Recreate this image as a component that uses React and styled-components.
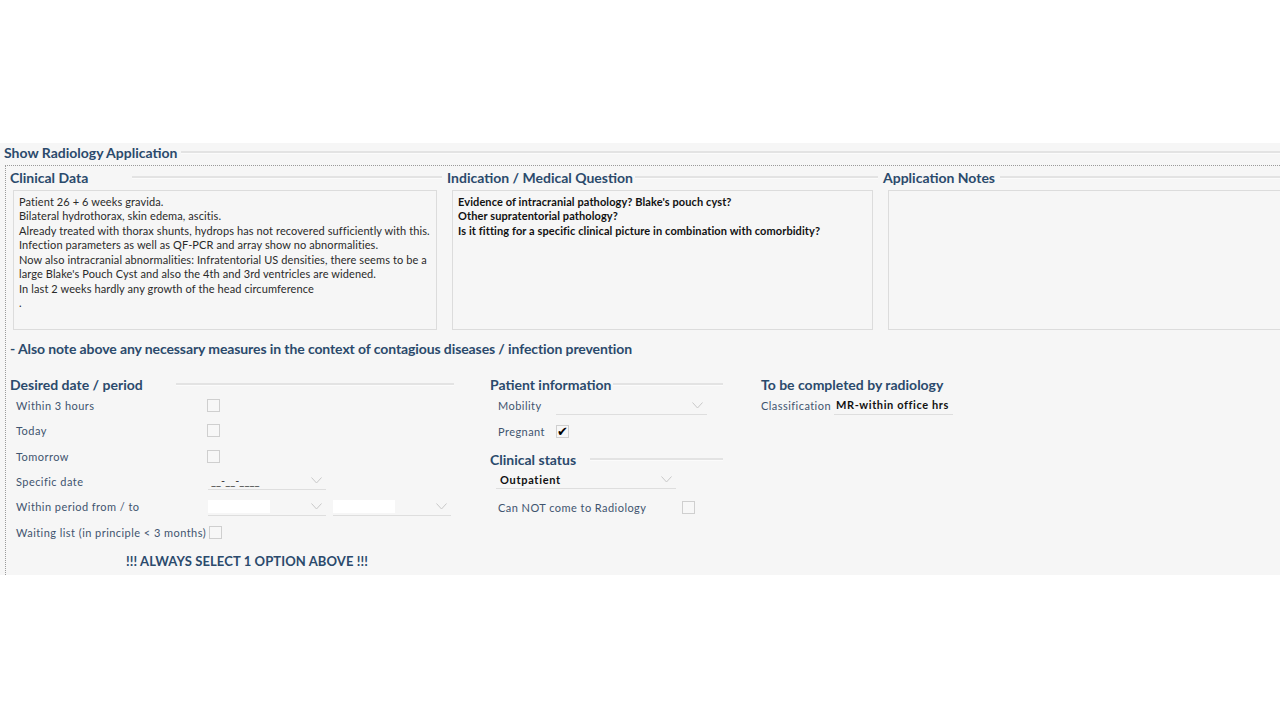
import React from "react";
import styled, { createGlobalStyle } from "styled-components";

const GlobalStyle = createGlobalStyle`
	body {
		margin: 0;
		background: #ffffff;
		font-family: Lato, "Liberation Sans", sans-serif;
	}
`;

const HEAD = "#2b4a6c";
const LABEL = "#3f546f";

const Page = styled.div`
	width: 1280px;
	height: 720px;
	padding-top: 143px;
	box-sizing: border-box;
	overflow: hidden;
`;

const Panel = styled.div`
	background: #f6f6f6;
	height: 432px;
	box-sizing: border-box;
	overflow: hidden;
`;

const PanelHeader = styled.div`
	display: flex;
	align-items: center;
	height: 19px;
	padding-left: 4px;
`;

const PanelTitle = styled.div`
	font-size: 14px;
	font-weight: 700;
	color: ${HEAD};
	white-space: nowrap;
`;

const Rule = styled.div`
	flex: ${({ $width }) => ($width ? `0 0 ${$width}px` : "1")};
	height: 2px;
	margin-left: ${({ $gap }) => $gap || 3}px;
	background: #e3e3e3;
	border-bottom: 1px solid #fbfbfb;
`;

const Frame = styled.div`
	margin: 3px 0 0 5px;
	border-top: 1px dotted #9a9a9a;
	border-left: 1px dotted #9a9a9a;
	height: 410px;
	padding: 2px 0 0 4px;
	box-sizing: border-box;
`;

const TopGrid = styled.div`
	display: grid;
	grid-template-columns: 432px 431px 440px;
	column-gap: 5px;
`;

const Column = styled.div`
	display: flex;
	flex-direction: column;
`;

const SectionHead = styled.div`
	display: flex;
	align-items: center;
	height: 18px;
	margin-top: ${({ $top }) => $top || 0}px;
`;

const SectionTitle = styled.div`
	font-size: 14px;
	font-weight: 700;
	color: ${HEAD};
	white-space: nowrap;
`;

const TextBox = styled.div`
	margin: 4px 5px 0 ${({ $inset }) => $inset}px;
	height: 140px;
	box-sizing: border-box;
	border: 1px solid #dcdcdc;
	background: #f6f6f6;
	padding: 4px 5px;
	font-size: 11px;
	line-height: 14.45px;
	color: ${({ $bold }) => ($bold ? "#111" : "#2a2a2a")};
	font-weight: ${({ $bold }) => ($bold ? 700 : 400)};
	letter-spacing: 0.1px;
	white-space: nowrap;
	overflow: hidden;
`;

const Notice = styled.div`
	margin-top: 10px;
	height: 18px;
	line-height: 18px;
	font-size: 14px;
	font-weight: 700;
	color: ${HEAD};
	letter-spacing: -0.1px;
`;

const BottomRow = styled.div`
	display: flex;
	margin-top: 17px;
`;

const FormColumn = styled.div`
	width: ${({ $width }) => $width}px;
	margin-right: ${({ $gap }) => $gap || 0}px;
	display: flex;
	flex-direction: column;
`;

const FieldRow = styled.div`
	display: flex;
	align-items: center;
	height: ${({ $h }) => $h || 25.4}px;
	padding-left: ${({ $indent }) => ($indent === undefined ? 6 : $indent)}px;
`;

const FieldLabel = styled.div`
	width: ${({ $width }) => ($width ? `${$width}px` : "auto")};
	flex: none;
	font-size: 11px;
	color: ${LABEL};
	letter-spacing: 0.45px;
	white-space: nowrap;
	margin-right: ${({ $gap }) => $gap || 0}px;
`;

const Checkbox = styled.div`
	width: 11px;
	height: 11px;
	border: 1px solid #cfcfcf;
	background: #f7f7f7;
	flex: none;
	display: flex;
	align-items: center;
	justify-content: center;
	font-size: 13px;
	line-height: 1;
	color: #000;
	font-family: "DejaVu Sans", sans-serif;
`;

const Select = styled.div`
	width: ${({ $width }) => $width}px;
	height: 18px;
	margin-left: ${({ $offset }) => $offset || 0}px;
	border-bottom: 1px solid #dedede;
	display: flex;
	align-items: center;
	justify-content: space-between;
	box-sizing: border-box;
	padding: 0 4px 0 ${({ $pad }) => ($pad === undefined ? 0 : $pad)}px;
	flex: none;
`;

const SelectValue = styled.span`
	font-size: 11px;
	font-weight: ${({ $bold }) => ($bold ? 700 : 400)};
	color: ${({ $bold }) => ($bold ? "#111" : "#333")};
	letter-spacing: ${({ $bold }) => ($bold ? "0.7px" : "0")};
	white-space: nowrap;
`;

const WhiteSlot = styled.div`
	width: 62px;
	height: 13px;
	background: #ffffff;
`;

const ValueField = styled.div`
	margin-left: 3px;
	padding: 0 4px 0 2px;
	height: 18px;
	line-height: 18px;
	border-bottom: 1px solid #dedede;
	font-size: 11px;
	font-weight: 700;
	color: #111;
	letter-spacing: 0.6px;
	white-space: nowrap;
`;

const AlwaysNote = styled.div`
	margin-top: 6px;
	padding-left: 116px;
	height: 18px;
	line-height: 18px;
	font-size: 13px;
	font-weight: 700;
	color: ${HEAD};
	letter-spacing: 0.1px;
`;

const Chevron = () => (
	<svg width="11" height="7" viewBox="0 0 11 7">
		<polyline points="0.5,0.5 5.5,6 10.5,0.5" fill="none" stroke="#c9c9c9" strokeWidth="1" />
	</svg>
);

const CLINICAL = [
	"Patient 26 + 6 weeks gravida.",
	"Bilateral hydrothorax, skin edema, ascitis.",
	"Already treated with thorax shunts, hydrops has not recovered sufficiently with this.",
	"Infection parameters as well as QF-PCR and array show no abnormalities.",
	"Now also intracranial abnormalities: Infratentorial US densities, there seems to be a",
	"large Blake's Pouch Cyst and also the 4th and 3rd ventricles are widened.",
	"In last 2 weeks hardly any growth of the head circumference",
	".",
];

const QUESTION = [
	"Evidence of intracranial  pathology? Blake's pouch  cyst?",
	"Other  supratentorial  pathology?",
	"Is it fitting  for  a specific clinical picture  in combination  with comorbidity?",
];

const App = () => (
	<Page>
		<GlobalStyle />
		<Panel>
			<PanelHeader>
				<PanelTitle>Show Radiology Application</PanelTitle>
				<Rule $gap={4} />
			</PanelHeader>
			<Frame>
				<TopGrid>
					<Column>
						<SectionHead>
							<SectionTitle>Clinical Data</SectionTitle>
							<Rule $gap={44} />
						</SectionHead>
						<TextBox $inset={3}>
							{CLINICAL.map((line, i) => (
								<div key={i}>{line}</div>
							))}
						</TextBox>
					</Column>
					<Column>
						<SectionHead>
							<SectionTitle>Indication / Medical Question</SectionTitle>
							<Rule $gap={2} />
						</SectionHead>
						<TextBox $inset={5} $bold>
							{QUESTION.map((line, i) => (
								<div key={i}>{line}</div>
							))}
						</TextBox>
					</Column>
					<Column>
						<SectionHead>
							<SectionTitle>Application Notes</SectionTitle>
							<Rule $gap={5} />
						</SectionHead>
						<TextBox $inset={5} />
					</Column>
				</TopGrid>

				<Notice>- Also note above any necessary measures in the context of contagious diseases / infection prevention</Notice>

				<BottomRow>
					<FormColumn $width={444} $gap={36}>
						<SectionHead>
							<SectionTitle>Desired date / period</SectionTitle>
							<Rule $gap={33} $width={278} />
						</SectionHead>
						<FieldRow $h={25}>
							<FieldLabel $width={191}>Within 3 hours</FieldLabel>
							<Checkbox />
						</FieldRow>
						<FieldRow $h={25.5}>
							<FieldLabel $width={191}>Today</FieldLabel>
							<Checkbox />
						</FieldRow>
						<FieldRow $h={25}>
							<FieldLabel $width={191}>Tomorrow</FieldLabel>
							<Checkbox />
						</FieldRow>
						<FieldRow $h={25.5}>
							<FieldLabel $width={192}>Specific date</FieldLabel>
							<Select $width={118} $pad={3}>
								<SelectValue>__-__-____</SelectValue>
								<Chevron />
							</Select>
						</FieldRow>
						<FieldRow $h={25.5}>
							<FieldLabel $width={192}>Within period from / to</FieldLabel>
							<Select $width={118}>
								<WhiteSlot />
								<Chevron />
							</Select>
							<Select $width={118} $offset={7}>
								<WhiteSlot />
								<Chevron />
							</Select>
						</FieldRow>
						<FieldRow $h={26}>
							<FieldLabel $gap={3}>Waiting list (in principle &lt; 3 months)</FieldLabel>
							<Checkbox />
						</FieldRow>
						<AlwaysNote>!!! ALWAYS SELECT 1 OPTION ABOVE !!!</AlwaysNote>
					</FormColumn>

					<FormColumn $width={233} $gap={38}>
						<SectionHead>
							<SectionTitle>Patient information</SectionTitle>
							<Rule $gap={2} />
						</SectionHead>
						<FieldRow $h={25} $indent={8}>
							<FieldLabel $width={58}>Mobility</FieldLabel>
							<Select $width={151}>
								<span />
								<Chevron />
							</Select>
						</FieldRow>
						<FieldRow $h={26} $indent={8}>
							<FieldLabel $width={58}>Pregnant</FieldLabel>
							<Checkbox>✔</Checkbox>
						</FieldRow>
						<SectionHead $top={6}>
							<SectionTitle>Clinical status</SectionTitle>
							<Rule $gap={14} />
						</SectionHead>
						<FieldRow $h={24} $indent={6}>
							<Select $width={180} $pad={4}>
								<SelectValue $bold>Outpatient</SelectValue>
								<Chevron />
							</Select>
						</FieldRow>
						<FieldRow $h={30} $indent={8}>
							<FieldLabel $width={184}>Can NOT come to Radiology</FieldLabel>
							<Checkbox />
						</FieldRow>
					</FormColumn>

					<FormColumn $width={300}>
						<SectionHead>
							<SectionTitle>To be completed by radiology</SectionTitle>
						</SectionHead>
						<FieldRow $h={25} $indent={0}>
							<FieldLabel>Classification</FieldLabel>
							<ValueField>MR-within office hrs</ValueField>
						</FieldRow>
					</FormColumn>
				</BottomRow>
			</Frame>
		</Panel>
	</Page>
);

export default App;
